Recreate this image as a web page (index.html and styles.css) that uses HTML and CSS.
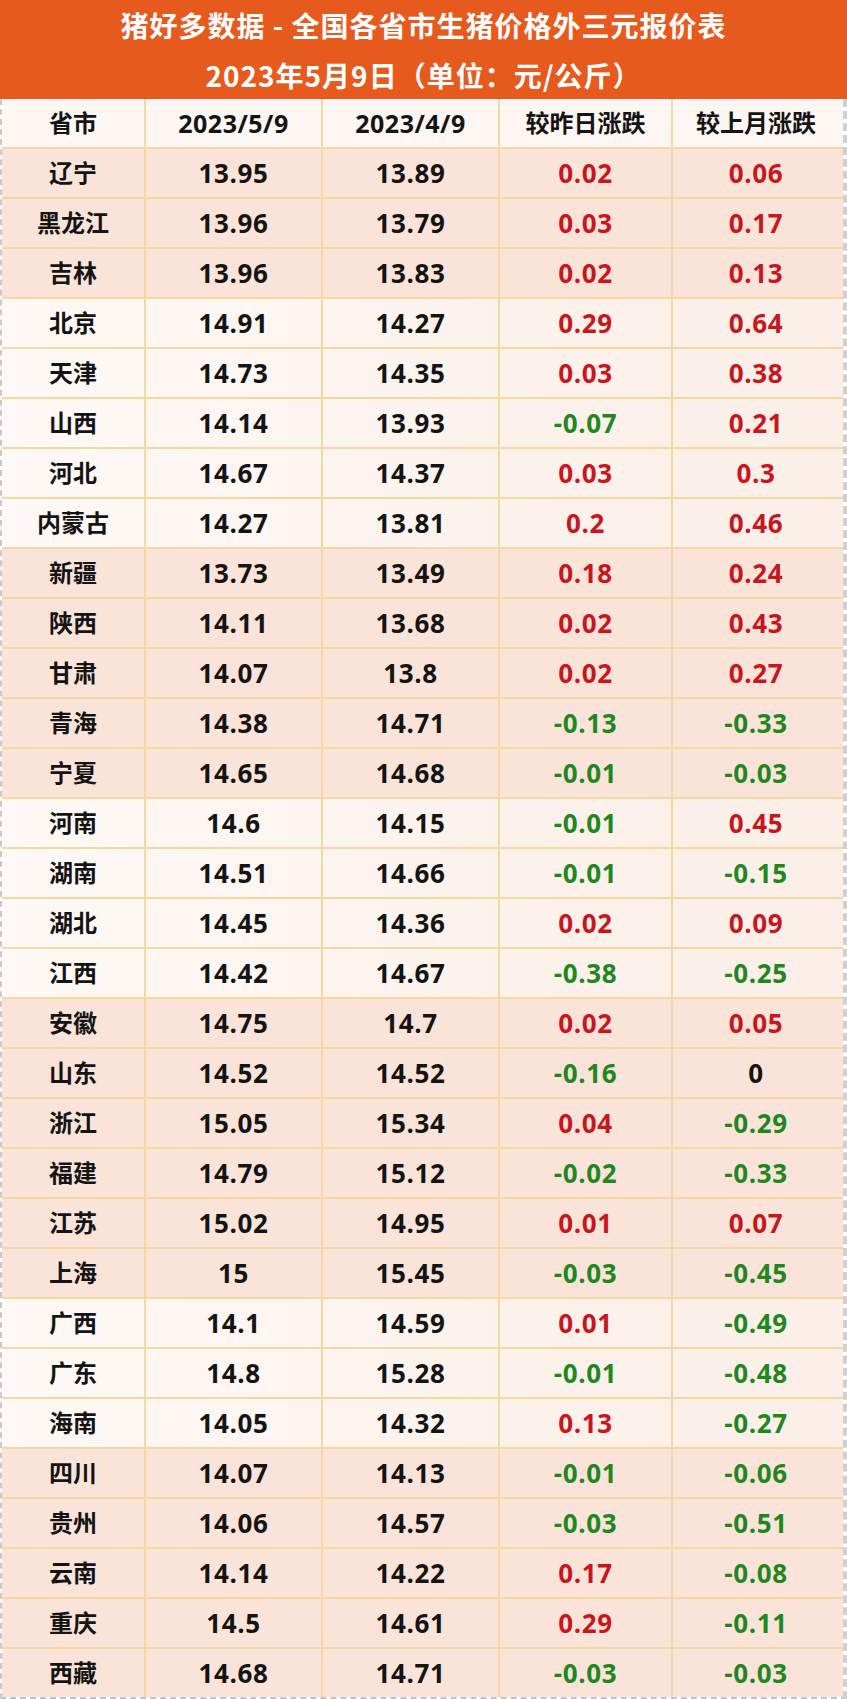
FILE: index.html
```html
<!DOCTYPE html>
<html lang="zh-CN">
<head>
<meta charset="utf-8">
<title>猪好多数据 - 全国各省市生猪价格外三元报价表</title>
<link rel="stylesheet" href="styles.css">
</head>
<body>
<div class="page">
  <header class="title">
    <div class="title-line">猪好多数据 - 全国各省市生猪价格外三元报价表</div>
    <div class="title-line">2023年5月9日（单位：元/公斤）</div>
  </header>
  <div class="table">
    <div class="row head">
      <div class="cell">省市</div>
      <div class="cell">2023/5/9</div>
      <div class="cell">2023/4/9</div>
      <div class="cell">较昨日涨跌</div>
      <div class="cell">较上月涨跌</div>
    </div>
    <div class="row pink"><div class="cell">辽宁</div><div class="cell num">13.95</div><div class="cell num">13.89</div><div class="cell num up">0.02</div><div class="cell num up">0.06</div></div>
    <div class="row pink"><div class="cell">黑龙江</div><div class="cell num">13.96</div><div class="cell num">13.79</div><div class="cell num up">0.03</div><div class="cell num up">0.17</div></div>
    <div class="row pink"><div class="cell">吉林</div><div class="cell num">13.96</div><div class="cell num">13.83</div><div class="cell num up">0.02</div><div class="cell num up">0.13</div></div>
    <div class="row light"><div class="cell">北京</div><div class="cell num">14.91</div><div class="cell num">14.27</div><div class="cell num up">0.29</div><div class="cell num up">0.64</div></div>
    <div class="row light"><div class="cell">天津</div><div class="cell num">14.73</div><div class="cell num">14.35</div><div class="cell num up">0.03</div><div class="cell num up">0.38</div></div>
    <div class="row light"><div class="cell">山西</div><div class="cell num">14.14</div><div class="cell num">13.93</div><div class="cell num down">-0.07</div><div class="cell num up">0.21</div></div>
    <div class="row light"><div class="cell">河北</div><div class="cell num">14.67</div><div class="cell num">14.37</div><div class="cell num up">0.03</div><div class="cell num up">0.3</div></div>
    <div class="row light"><div class="cell">内蒙古</div><div class="cell num">14.27</div><div class="cell num">13.81</div><div class="cell num up">0.2</div><div class="cell num up">0.46</div></div>
    <div class="row pink"><div class="cell">新疆</div><div class="cell num">13.73</div><div class="cell num">13.49</div><div class="cell num up">0.18</div><div class="cell num up">0.24</div></div>
    <div class="row pink"><div class="cell">陕西</div><div class="cell num">14.11</div><div class="cell num">13.68</div><div class="cell num up">0.02</div><div class="cell num up">0.43</div></div>
    <div class="row pink"><div class="cell">甘肃</div><div class="cell num">14.07</div><div class="cell num">13.8</div><div class="cell num up">0.02</div><div class="cell num up">0.27</div></div>
    <div class="row pink"><div class="cell">青海</div><div class="cell num">14.38</div><div class="cell num">14.71</div><div class="cell num down">-0.13</div><div class="cell num down">-0.33</div></div>
    <div class="row pink"><div class="cell">宁夏</div><div class="cell num">14.65</div><div class="cell num">14.68</div><div class="cell num down">-0.01</div><div class="cell num down">-0.03</div></div>
    <div class="row light"><div class="cell">河南</div><div class="cell num">14.6</div><div class="cell num">14.15</div><div class="cell num down">-0.01</div><div class="cell num up">0.45</div></div>
    <div class="row light"><div class="cell">湖南</div><div class="cell num">14.51</div><div class="cell num">14.66</div><div class="cell num down">-0.01</div><div class="cell num down">-0.15</div></div>
    <div class="row light"><div class="cell">湖北</div><div class="cell num">14.45</div><div class="cell num">14.36</div><div class="cell num up">0.02</div><div class="cell num up">0.09</div></div>
    <div class="row light"><div class="cell">江西</div><div class="cell num">14.42</div><div class="cell num">14.67</div><div class="cell num down">-0.38</div><div class="cell num down">-0.25</div></div>
    <div class="row pink"><div class="cell">安徽</div><div class="cell num">14.75</div><div class="cell num">14.7</div><div class="cell num up">0.02</div><div class="cell num up">0.05</div></div>
    <div class="row pink"><div class="cell">山东</div><div class="cell num">14.52</div><div class="cell num">14.52</div><div class="cell num down">-0.16</div><div class="cell num">0</div></div>
    <div class="row pink"><div class="cell">浙江</div><div class="cell num">15.05</div><div class="cell num">15.34</div><div class="cell num up">0.04</div><div class="cell num down">-0.29</div></div>
    <div class="row pink"><div class="cell">福建</div><div class="cell num">14.79</div><div class="cell num">15.12</div><div class="cell num down">-0.02</div><div class="cell num down">-0.33</div></div>
    <div class="row pink"><div class="cell">江苏</div><div class="cell num">15.02</div><div class="cell num">14.95</div><div class="cell num up">0.01</div><div class="cell num up">0.07</div></div>
    <div class="row pink"><div class="cell">上海</div><div class="cell num">15</div><div class="cell num">15.45</div><div class="cell num down">-0.03</div><div class="cell num down">-0.45</div></div>
    <div class="row light"><div class="cell">广西</div><div class="cell num">14.1</div><div class="cell num">14.59</div><div class="cell num up">0.01</div><div class="cell num down">-0.49</div></div>
    <div class="row light"><div class="cell">广东</div><div class="cell num">14.8</div><div class="cell num">15.28</div><div class="cell num down">-0.01</div><div class="cell num down">-0.48</div></div>
    <div class="row light"><div class="cell">海南</div><div class="cell num">14.05</div><div class="cell num">14.32</div><div class="cell num up">0.13</div><div class="cell num down">-0.27</div></div>
    <div class="row pink"><div class="cell">四川</div><div class="cell num">14.07</div><div class="cell num">14.13</div><div class="cell num down">-0.01</div><div class="cell num down">-0.06</div></div>
    <div class="row pink"><div class="cell">贵州</div><div class="cell num">14.06</div><div class="cell num">14.57</div><div class="cell num down">-0.03</div><div class="cell num down">-0.51</div></div>
    <div class="row pink"><div class="cell">云南</div><div class="cell num">14.14</div><div class="cell num">14.22</div><div class="cell num up">0.17</div><div class="cell num down">-0.08</div></div>
    <div class="row pink"><div class="cell">重庆</div><div class="cell num">14.5</div><div class="cell num">14.61</div><div class="cell num up">0.29</div><div class="cell num down">-0.11</div></div>
    <div class="row pink last"><div class="cell">西藏</div><div class="cell num">14.68</div><div class="cell num">14.71</div><div class="cell num down">-0.03</div><div class="cell num down">-0.03</div></div>
  </div>
</div>
</body>
</html>
```

FILE: styles.css
```css
* { box-sizing: border-box; }
html, body { margin: 0; padding: 0; background: #ffffff; }
.page {
  width: 847px;
  font-family: "Open Sans", "Noto Sans CJK SC", sans-serif;
  font-weight: 700;
}
.title {
  height: 99px;
  background: #e75a1e;
  color: #ffffff;
  text-align: center;
  font-family: "Noto Sans CJK SC", sans-serif;
  font-size: 28px;
  font-weight: 700;
  letter-spacing: 1px;
}
.title-line { line-height: 50px; height: 50px; }
.table {
  border-left: 2px dashed #c9c9c9;
  border-right: 4px dashed #d0d0d0;
  border-bottom: 2px dashed #c4c4c4;
}
.row {
  display: grid;
  grid-template-columns: 144px 177px 177px 173px 166px;
  height: 50px;
  border-bottom: 2px solid #f3d89f;
}
.row.last { border-bottom: none; height: 48px; }
.head { background: #fdf6f2; }
.pink { background: #fae4d9; }
.light { background: linear-gradient(90deg, #fef9f6 0%, #fcf2ec 60%, #fbefe8 100%); }
.cell {
  display: flex;
  align-items: center;
  justify-content: center;
  height: 48px;
  line-height: 48px;
  font-size: 24px;
  color: #141414;
  border-right: 2px solid #f3d89f;
  white-space: nowrap;
}
.cell:last-child { border-right: none; }
.head .cell { font-size: 24px; }
.num { font-size: 26px; font-family: "Open Sans", sans-serif; letter-spacing: 0.6px; }
.head .cell:nth-child(2), .head .cell:nth-child(3) { font-family: "Open Sans", sans-serif; font-size: 25px; letter-spacing: 0.5px; }
.up { color: #c8161e; }
.down { color: #1f871f; }
```
